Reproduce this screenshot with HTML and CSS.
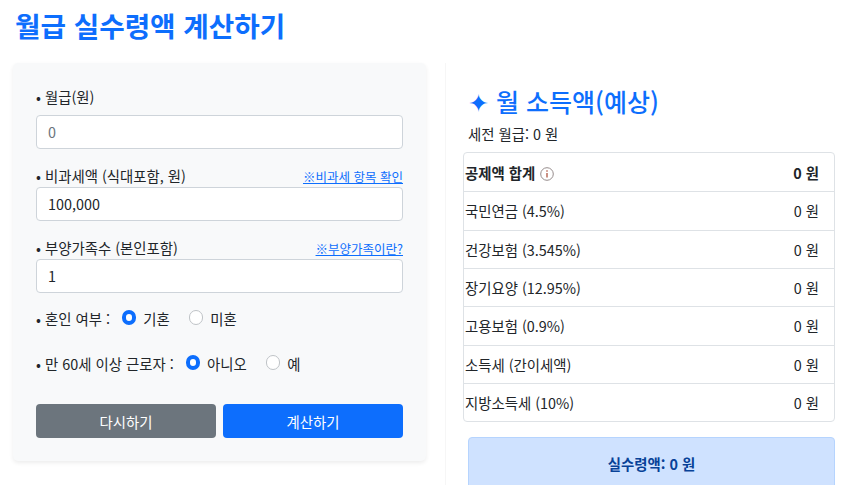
FILE: index.html
```html
<!DOCTYPE html>
<html lang="ko">
<head>
    <meta charset="UTF-8">
    <meta name="viewport" content="width=device-width, initial-scale=1.0">
    <title>월급 실수령액 계산하기</title>
    <link rel="stylesheet" href="styles.css">
</head>
<body>
    <h1 class="page-title">월급 실수령액 계산하기</h1>

    <div class="layout">
        <!-- Input form -->
        <form class="calc-card">
            <div class="field field-first">
                <div class="field-head"><label class="field-label">• 월급(원)</label></div>
                <input class="text-input" type="text" placeholder="0">
            </div>
            <div class="field">
                <div class="field-head">
                    <label class="field-label">• 비과세액 (식대포함, 원)</label>
                    <a class="help-link" href="#">※비과세 항목 확인</a>
                </div>
                <input class="text-input" type="text" value="100,000">
            </div>
            <div class="field">
                <div class="field-head">
                    <label class="field-label">• 부양가족수 (본인포함)</label>
                    <a class="help-link" href="#">※부양가족이란?</a>
                </div>
                <input class="text-input" type="text" value="1">
            </div>

            <div class="radio-row radio-row-married">
                <span class="field-label">• 혼인 여부 :</span>
                <span class="radio-option"><span class="radio radio-on"></span>기혼</span>
                <span class="radio-option"><span class="radio"></span>미혼</span>
            </div>
            <div class="radio-row radio-row-senior">
                <span class="field-label">• 만 60세 이상 근로자 :</span>
                <span class="radio-option"><span class="radio radio-on"></span>아니오</span>
                <span class="radio-option"><span class="radio"></span>예</span>
            </div>

            <div class="actions">
                <button class="btn btn-reset" type="button">다시하기</button>
                <button class="btn btn-submit" type="button">계산하기</button>
            </div>
        </form>

        <!-- Result -->
        <div class="result">
            <h2 class="result-title">✦ 월 소득액(예상)</h2>
            <p class="result-gross">세전 월급: 0 원</p>
            <ul class="result-list">
                <li class="result-row result-row-total">
                    <span>공제액 합계 <svg class="info-icon" width="14" height="14" viewBox="0 0 14 14"><circle cx="7" cy="7" r="6.3" fill="none" stroke="#968c8c" stroke-width="1"/><path d="M7 6v4.4" stroke="#a8452f" stroke-width="1.2"/><circle cx="7" cy="4" r="0.8" fill="#a8452f"/></svg></span>
                    <span>0 원</span>
                </li>
                <li class="result-row"><span>국민연금 (4.5%)</span><span>0 원</span></li>
                <li class="result-row"><span>건강보험 (3.545%)</span><span>0 원</span></li>
                <li class="result-row"><span>장기요양 (12.95%)</span><span>0 원</span></li>
                <li class="result-row"><span>고용보험 (0.9%)</span><span>0 원</span></li>
                <li class="result-row"><span>소득세 (간이세액)</span><span>0 원</span></li>
                <li class="result-row"><span>지방소득세 (10%)</span><span>0 원</span></li>
            </ul>
            <div class="net-pay">실수령액: 0 원</div>
        </div>
    </div>
</body>
</html>
```

FILE: styles.css
```css
* {
    box-sizing: border-box;
}
html {
    overflow: hidden;
}
body {
    margin: 0;
    font-family: "Noto Sans CJK KR", "Noto Sans", sans-serif;
    font-size: 14.4px;
    line-height: 1.5;
    color: #212529;
    background-color: #fff;
}
.page-title {
    margin: 0;
    padding: 0 0 0 15px;
    height: 63px;
    font-size: 27.7px;
    line-height: 50px;
    font-weight: 700;
    color: #0d6efd;
}
.layout {
    display: flex;
    align-items: flex-start;
}
.calc-card {
    width: 413px;
    height: 398px;
    margin-left: 13px;
    padding: 23px 23px 0;
    background-color: #f8f9fa;
    border-radius: 5px;
    box-shadow: 0 2px 4px rgba(0, 0, 0, 0.075);
}
.field {
    margin-top: 16px;
}
.field-first {
    margin-top: 0;
}
.field-head {
    display: flex;
    justify-content: space-between;
    align-items: flex-end;
    height: 22px;
}
.field-first .field-head {
    height: 29px;
    padding-bottom: 7px;
}
.field-label {
    color: #212529;
}
.help-link {
    font-size: 12.5px;
    color: #0d6efd;
}
.text-input {
    display: block;
    width: 100%;
    height: 34px;
    padding: 0 11px 2px;
    font-family: inherit;
    font-size: 14.4px;
    color: #212529;
    background-color: #fff;
    border: 1px solid #ced4da;
    border-radius: 4px;
}
.text-input::placeholder {
    color: #6c757d;
}
.radio-row {
    display: flex;
    align-items: center;
    height: 21px;
}
.radio-row-married {
    margin-top: 15px;
}
.radio-row-senior {
    margin-top: 24px;
}
.radio-row .field-label {
    margin-right: 12px;
}
.radio-option {
    display: inline-flex;
    align-items: center;
    margin-right: 19px;
}
.radio {
    width: 14.4px;
    height: 14.4px;
    margin-right: 7px;
    margin-top: -2px;
    background-color: #fff;
    border: 1px solid #bfc3c7;
    border-radius: 50%;
}
.radio-on {
    border: 4px solid #0d6efd;
}
.actions {
    display: flex;
    gap: 7px;
    margin-top: 30px;
}
.btn {
    flex: 1;
    height: 34px;
    font-family: inherit;
    font-size: 14.4px;
    color: #fff;
    border: none;
    border-radius: 4px;
}
.btn-reset {
    background-color: #6c757d;
}
.btn-submit {
    background-color: #0d6efd;
}
.result {
    width: 390px;
    height: 440px;
    margin-left: 19px;
    padding: 0 0 0 17px;
    border-left: 1px solid #f6f6f6;
}
.result-title {
    margin: 19px 0 0 5px;
    font-size: 25px;
    line-height: 38px;
    font-weight: 500;
    color: #0d6efd;
}
.result-gross {
    margin: 3px 0 0 5px;
    height: 29px;
    line-height: 21px;
}
.result-list {
    list-style: none;
    margin: 0;
    padding: 1px 0 0;
    border: 1px solid #dee2e6;
    border-radius: 4px;
}
.result-row {
    display: flex;
    justify-content: space-between;
    align-items: center;
    height: 38.33px;
    padding: 0 15px 0 1px;
    border-bottom: 1px solid #dee2e6;
}
.result-row:last-child {
    height: 37px;
    border-bottom: none;
}
.result-row-total {
    font-weight: 700;
}
.info-icon {
    vertical-align: -2px;
    margin-left: 1px;
}
.net-pay {
    margin: 15px 0 0 5px;
    height: 58px;
    padding-top: 15px;
    text-align: center;
    font-weight: 700;
    color: #084298;
    background-color: #cfe2ff;
    border: 1px solid #b6d4fe;
    border-radius: 4px;
}
```
